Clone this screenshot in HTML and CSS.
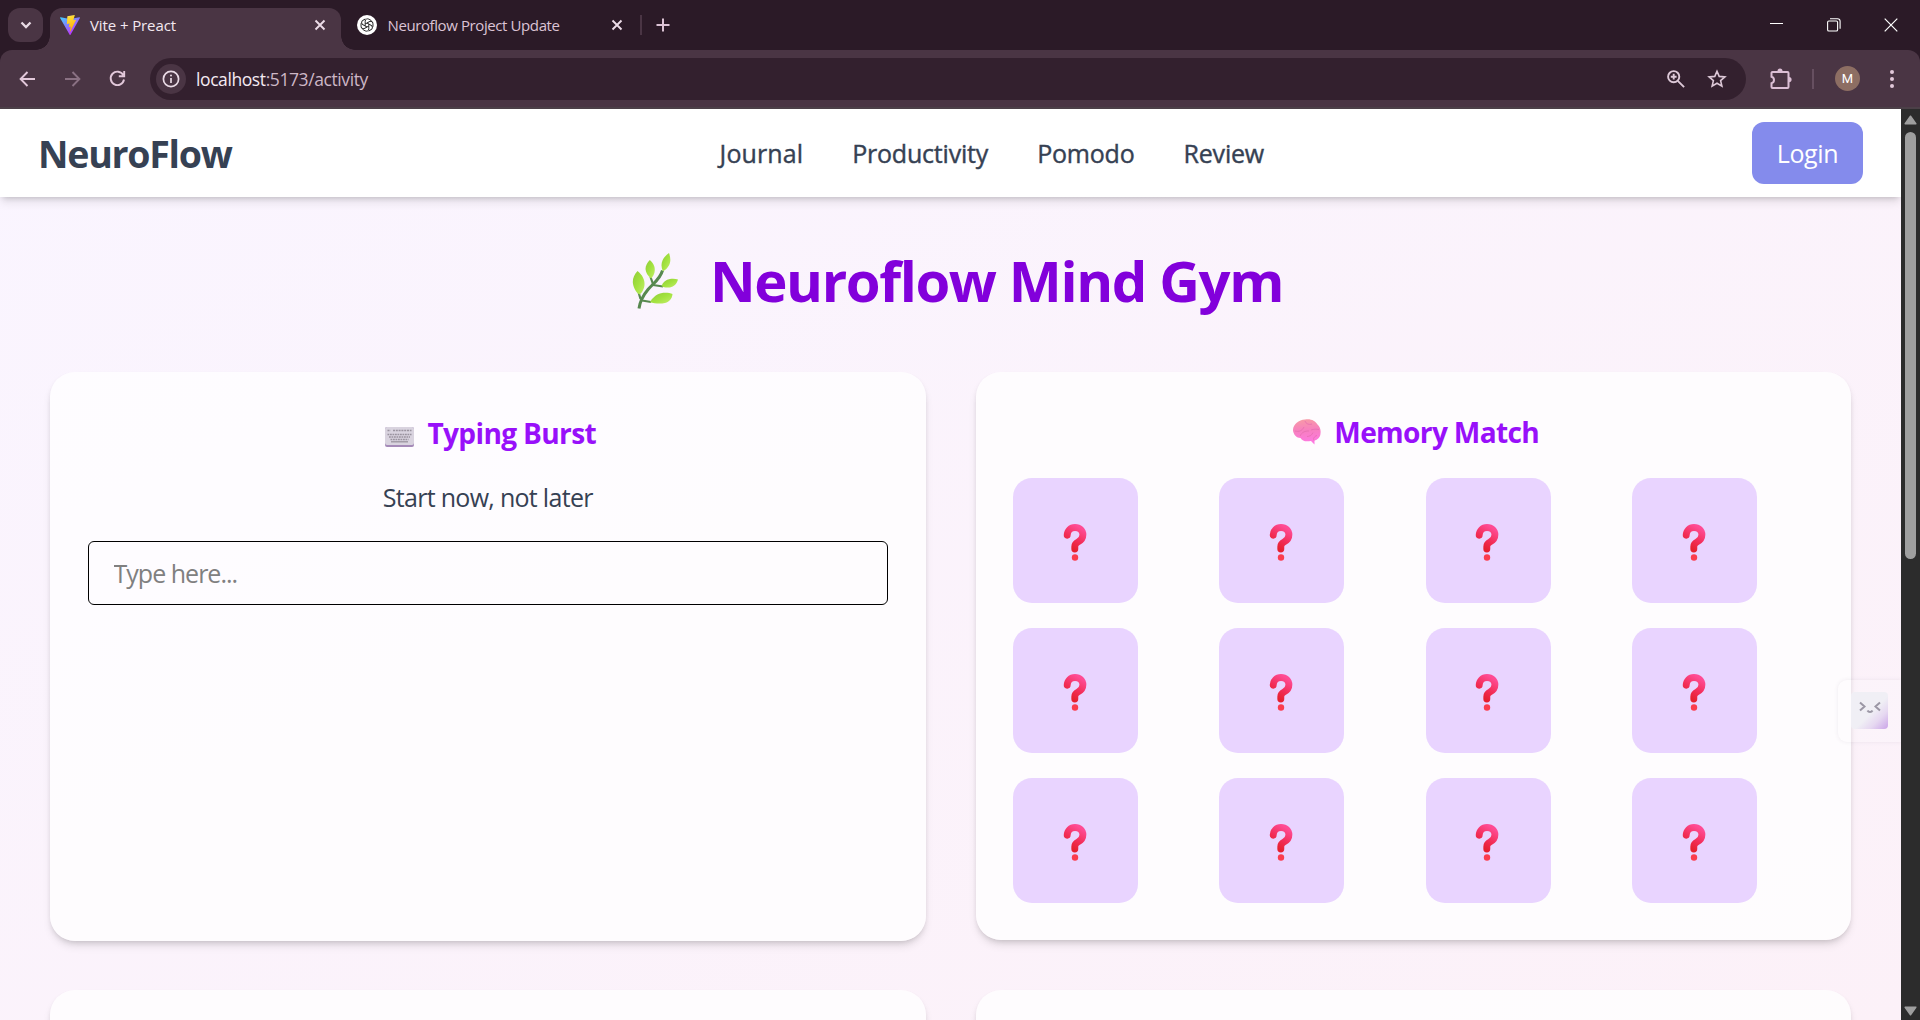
FILE: index.html
```html
<!DOCTYPE html>
<html lang="en">
<head>
<meta charset="utf-8">
<title>Vite + Preact</title>
<link rel="stylesheet" href="styles.css">
</head>
<body>
<svg class="defs" width="0" height="0" aria-hidden="true">
  <defs>
    <linearGradient id="vite-a" x1="0" y1="0" x2=".65" y2=".9"><stop offset="0" stop-color="#41d1ff"/><stop offset="1" stop-color="#bd34fe"/></linearGradient>
    <linearGradient id="vite-b" x1=".4" y1="0" x2=".6" y2="1"><stop offset="0" stop-color="#ffea83"/><stop offset=".1" stop-color="#ffdd35"/><stop offset="1" stop-color="#ffa800"/></linearGradient>
    <linearGradient id="q-grad" x1=".8" y1="0" x2=".35" y2="1"><stop offset="0" stop-color="#ff4b94"/><stop offset=".55" stop-color="#f32e59"/><stop offset="1" stop-color="#e6202f"/></linearGradient>
    <linearGradient id="leaf" x1="0" y1="0" x2="1" y2="1"><stop offset="0" stop-color="#8fcb3a"/><stop offset=".5" stop-color="#a3e23f"/><stop offset="1" stop-color="#c3ee6c"/></linearGradient>
    <linearGradient id="brain" x1=".4" y1="0" x2=".5" y2="1"><stop offset="0" stop-color="#f79aa6"/><stop offset=".45" stop-color="#f77fc0"/><stop offset="1" stop-color="#ff78e6"/></linearGradient>
    <symbol id="question" viewBox="0 0 24 38">
      <path d="M4.200 12.200C4.400 7.500 7.500 4.500 12 4.500c4.700 0 7.900 3 7.900 7.300 0 3.300-1.900 5.700-4.900 7.200-2.200 1.100-3.200 2.200-3.200 4.400V26" fill="none" stroke="url(#q-grad)" stroke-width="6.900" stroke-linecap="round" stroke-linejoin="round"/>
      <circle cx="12" cy="34.500" r="3.200" fill="#fb3d4e"/>
    </symbol>
    <symbol id="close" viewBox="0 0 12 12"><path d="M1.500 1.500l9 9m0-9l-9 9" fill="none" stroke="currentColor" stroke-width="1.900"/></symbol>
    <path id="knot" d="M8.200 10.800V6.200a2.400 2.400 0 0 1 3.700-2l2.600 1.500"/>
  </defs>
</svg>

<div class="browser">
  <div class="tabstrip">
    <div class="tab-search"><svg width="14" height="10" viewBox="0 0 14 10"><path d="M2.500 2.500L7 7l4.500-4.500" fill="none" stroke="#e9dbe5" stroke-width="2.300"/></svg></div>
    <div class="tab active">
      <svg class="favicon" viewBox="0 0 256 257"><path fill="url(#vite-a)" d="M255.153 37.938L134.897 252.976c-2.483 4.440-8.862 4.466-11.382.048L.875 37.958c-2.746-4.814 1.371-10.646 6.827-9.670l120.385 21.517a6.537 6.537 0 0 0 2.322-.004l117.867-21.483c5.438-.991 9.574 4.796 6.877 9.620Z"/><path fill="url(#vite-b)" d="M185.432.063L96.440 17.501a3.268 3.268 0 0 0-2.634 3.014l-5.474 92.456a3.268 3.268 0 0 0 3.997 3.378l24.777-5.718c2.318-.535 4.413 1.507 3.936 3.838l-7.361 36.047c-.495 2.426 1.782 4.500 4.151 3.780l15.304-4.649c2.372-.72 4.652 1.360 4.150 3.788l-11.698 56.621c-.732 3.542 3.979 5.473 5.943 2.437l1.313-2.028l72.516-144.720c1.215-2.423-.88-5.186-3.540-4.672l-25.505 4.922c-2.396.462-4.435-1.770-3.759-4.114l16.646-57.705c.677-2.350-1.370-4.583-3.769-4.113Z"/></svg>
      <span class="tab-title">Vite + Preact</span>
      <svg class="tab-close" width="12" height="12"><use href="#close"/></svg>
    </div>
    <div class="tab">
      <svg class="favicon" viewBox="0 0 20 20"><circle cx="10" cy="10" r="10" fill="#fff"/><g fill="none" stroke="#151515" stroke-width=".9"><use href="#knot"/><use href="#knot" transform="rotate(60 10 10)"/><use href="#knot" transform="rotate(120 10 10)"/><use href="#knot" transform="rotate(180 10 10)"/><use href="#knot" transform="rotate(240 10 10)"/><use href="#knot" transform="rotate(300 10 10)"/></g></svg>
      <span class="tab-title tight">Neuroflow Project Update</span>
      <svg class="tab-close" width="12" height="12"><use href="#close"/></svg>
    </div>
    <span class="tab-divider"></span>
    <svg class="new-tab" width="14" height="14" viewBox="0 0 14 14"><path d="M7 .5v13M.5 7h13" stroke="#dcc3d5" stroke-width="2"/></svg>
    <div class="window-controls">
      <svg width="14" height="14" viewBox="0 0 14 14"><path d="M0 5.500h13" stroke="#fff"/></svg>
      <svg width="14" height="14" viewBox="0 0 14 14" fill="none" stroke="#fff" stroke-width="1.100"><rect x=".6" y="3" width="10" height="10" rx="1.300"/><path d="M3 .7h7.500a2.600 2.600 0 0 1 2.600 2.600v7.500"/></svg>
      <svg width="14" height="14" viewBox="0 0 14 14"><path d="M.7.7l12.600 12.600m0-12.600L.7 13.300" stroke="#fff" stroke-width="1.200"/></svg>
    </div>
  </div>

  <div class="toolbar">
    <svg class="nav-icon" width="17" height="16" viewBox="0 0 17 16"><path d="M16 8H2M8.500 1L1.600 8l6.900 7" fill="none" stroke="#e2c8da" stroke-width="1.900"/></svg>
    <svg class="nav-icon forward" width="17" height="16" viewBox="0 0 17 16"><path d="M1 8h14M8.500 1l6.900 7-6.900 7" fill="none" stroke="#8a7183" stroke-width="1.900"/></svg>
    <svg class="nav-icon reload" width="17" height="17" viewBox="0 0 17 17"><path d="M14.200 5A6.700 6.700 0 1 0 15 9.500M15.200 1v5.300H9.800" fill="none" stroke="#e2c8da" stroke-width="1.900"/></svg>
    <div class="omnibox">
      <span class="site-info"><svg width="18" height="18" viewBox="0 0 18 18"><circle cx="9" cy="9" r="7.600" fill="none" stroke="#eadbe6" stroke-width="1.700"/><path d="M9 8v5" stroke="#eadbe6" stroke-width="1.700"/><circle cx="9" cy="5.500" r="1" fill="#eadbe6"/></svg></span>
      <span class="url">localhost<span class="url-rest">:5173/activity</span></span>
      <svg class="zoom-icon" width="18" height="18" viewBox="0 0 18 18"><g fill="none" stroke="#ddc8d7" stroke-width="1.900"><circle cx="6.700" cy="6.700" r="5.600"/><path d="M10.800 10.800l6.300 6.300M6.700 3.800v5.800M3.800 6.700h5.800"/></g></svg>
      <svg width="20" height="19" viewBox="0 0 20 19"><path d="M10 2.200l2.200 5.200 5.700.5-4.300 3.700 1.300 5.500-4.900-2.900-4.900 2.900 1.300-5.500L2.100 7.900l5.700-.5z" fill="none" stroke="#ddc8d7" stroke-width="1.600"/></svg>
    </div>
    <svg class="extensions" width="22" height="22" viewBox="0 0 22 22"><path d="M2.500 4h15a1 1 0 0 1 1 1v14a1 1 0 0 1-1 1h-15a1 1 0 0 1-1-1v-3.800a3.300 3.300 0 0 0 0-6.400V5a1 1 0 0 1 1-1z" fill="none" stroke="#dcbfd5" stroke-width="2"/><path d="M7.500 3a2.500 2.500 0 0 1 5 0zM19 9a2.600 2.600 0 0 1 0 5.200z" fill="#dcbfd5"/></svg>
    <span class="toolbar-divider"></span>
    <span class="avatar">M</span>
    <svg class="menu" width="4" height="18" viewBox="0 0 4 18" fill="#e2c8da"><circle cx="2" cy="2" r="2"/><circle cx="2" cy="9" r="2"/><circle cx="2" cy="16" r="2"/></svg>
  </div>

  <div class="viewport">
    <div class="page">
      <header class="site-header">
        <div class="brand">NeuroFlow</div>
        <nav class="site-nav"><a class="journal">Journal</a><a>Productivity</a><a>Pomodo</a><a>Review</a></nav>
        <button class="login">Login</button>
      </header>
      <main class="content">
        <h1 class="title">
          <svg class="herb" width="46" height="56" viewBox="0 0 46 56"><path d="M7 55.500c1-8 4-13 9-19 4.500-5.500 12-10 14.500-19" fill="none" stroke="#57884f" stroke-width="3"/><path d="M10 47.500l9 1.500M21 32l10 1.500M6.500 39l2 7M18.500 24l2.500 7" fill="none" stroke="#57884f" stroke-width="2.200"/><g fill="url(#leaf)"><path d="M5.500 18c5 4 7.500 9 7 14-.4 4-2.500 8-5 9.500C3.500 39 1 33.500.800 29c-.1-4 1.700-8 4.700-11z"/><path d="M17.800 7c4.500 4 5.500 8 4.800 12-.6 3-2 5-3.500 6.500-3-2.500-5.500-6-5.600-9.500 0-3.300 1.800-6.500 4.300-9z"/><path d="M37 0c1.800 5 1.800 9-.1 12.500-1.400 2.600-3.500 4.800-6 5.800-1.700-3.700-1.900-7.500-.3-11C31.900 4.400 34 2 37 0z"/><path d="M46 26.500c-1.500 4.700-4 7.300-8 7.900-3.500.5-6.500-.2-8.500-1.400 1.500-3.800 4.500-6.500 8.500-7 3-.4 5.800-.2 8 .5z"/><path d="M40.500 41c-.5 4.500-3 7.800-7.500 9-5 1.200-10.500.5-15-.8 2-4 6-8 11-9 4-.8 8.500-.5 11.500.8z"/></g></svg>
          <span>Neuroflow Mind Gym</span>
        </h1>
        <div class="cards">
          <section class="card typing">
            <h2 class="card-title">
              <svg width="29" height="20" viewBox="0 0 29 20"><rect width="29" height="20" rx="2" fill="#a58ab8"/><rect width="29" height="18" rx="2" fill="#d9d3df"/><g stroke="#9a939f" stroke-width="1.300" fill="none"><path d="M2.500 3.500h3m2.500 0h18.500" stroke-dasharray="2 .8"/><path d="M2.500 7.500h24M4 10h21M5.500 12.500h18" stroke-dasharray="1.800 .7"/><path d="M6 14.800h17"/></g></svg>
              <span>Typing Burst</span>
            </h2>
            <p class="prompt">Start now, not later</p>
            <input class="answer" type="text" placeholder="Type here...">
          </section>
          <section class="card memory">
            <h2 class="card-title">
              <svg width="28" height="26" viewBox="0 0 28 26"><path d="M12 .5c5-1.300 10.500 1 12.500 5 2.500 2 3.500 5.500 3 9-.2 4-3 6.500-6 7v4l-3.500-3.500c-5 .8-8.500.5-10.500-3C3.500 19 .500 15.500 0 11.500-.200 5.500 5.500 1 12 .5z" fill="url(#brain)"/><path d="M2 12c4 1 7 0 9-4m-4 9c2-4 5-5 9-5m-4-10c1 3 4 4 7 3m-1 6c3-1 5-1 8-.5m-12 7c2 0 5-1 6-4m1 8c-1-2 0-4 3-5" fill="none" stroke="#e56fb0" stroke-width=".8"/></svg>
              <span>Memory Match</span>
            </h2>
            <div class="tiles">
              <button class="tile"><svg><use href="#question"/></svg></button><button class="tile"><svg><use href="#question"/></svg></button><button class="tile"><svg><use href="#question"/></svg></button><button class="tile"><svg><use href="#question"/></svg></button>
              <button class="tile"><svg><use href="#question"/></svg></button><button class="tile"><svg><use href="#question"/></svg></button><button class="tile"><svg><use href="#question"/></svg></button><button class="tile"><svg><use href="#question"/></svg></button>
              <button class="tile"><svg><use href="#question"/></svg></button><button class="tile"><svg><use href="#question"/></svg></button><button class="tile"><svg><use href="#question"/></svg></button><button class="tile"><svg><use href="#question"/></svg></button>
            </div>
          </section>
          <section class="card next"></section>
          <section class="card next"></section>
        </div>
      </main>
      <div class="helper"><div class="face"><svg width="22" height="13" viewBox="0 0 22 13"><path d="M1 1.500l4.500 4L1 9.500M21 1.500l-4.500 4 4.500 4M8.500 9.500c1 2 4 2 5 0" fill="none" stroke="#9b97a5" stroke-width="2"/></svg></div></div>
    </div>
    <div class="scrollbar">
      <svg width="13" height="10" viewBox="0 0 13 10"><path d="M6.500 1.200L11.800 8.800H1.200z" fill="#9f9f9f" stroke="#9f9f9f" stroke-width="1.500" stroke-linejoin="round"/></svg>
      <div class="thumb"></div>
      <svg class="down" width="13" height="10" viewBox="0 0 13 10"><path d="M6.500 8.800L11.800 1.200H1.200z" fill="#9f9f9f" stroke="#9f9f9f" stroke-width="1.500" stroke-linejoin="round"/></svg>
    </div>
  </div>
</div>
</body>
</html>
```
FILE: styles.css
```css
* { box-sizing: border-box; }
body { margin: 0; font-family: "Open Sans", "Noto Sans", sans-serif; color: #364153; }
svg { display: block; flex: none; }
.defs { position: absolute; }
button { border: 0; font: inherit; }

.browser { display: flex; flex-direction: column; width: 1920px; height: 1020px; overflow: hidden; background: #2b1a27; }

/* Tab strip */
.tabstrip { display: flex; align-items: flex-start; height: 50px; padding: 8px 0 0 8px; color: #dcc3d5; }
.tab-search { display: flex; align-items: center; justify-content: center; width: 35px; height: 34px; border-radius: 12px; background: #4a3544; }
.tab { position: relative; display: flex; align-items: center; height: 34px; width: 282px; padding: 0 0 0 16px; }
.tab.active { width: 291px; height: 42px; margin-left: 7px; padding: 0 15px 8px 10px; border-radius: 12px 12px 0 0; background: #4a3544; color: #f3e8f0; }
.tab.active::before, .tab.active::after { content: ""; position: absolute; bottom: 0; width: 14px; height: 14px; }
.tab.active::before { left: -14px; background: radial-gradient(circle at 0 0, transparent 13.500px, #4a3544 14px); }
.tab.active::after { right: -14px; background: radial-gradient(circle at 100% 0, transparent 13.500px, #4a3544 14px); }
.favicon { width: 20px; height: 20px; }
.tab-title { margin-left: 10px; font-size: 15px; line-height: 20px; letter-spacing: -.1px; white-space: nowrap; }
.tab-title.tight { letter-spacing: -.4px; margin-left: 10.500px; }
.tab-close { margin-left: auto; color: #ecdce8; }
.tab-divider { width: 2px; height: 20px; margin: 7px 0 0 17px; background: #4a3544; }
.new-tab { margin: 10px 0 0 14px; }
.window-controls { display: flex; gap: 43px; margin: 10px 22px 0 auto; }

/* Toolbar */
.toolbar { display: flex; align-items: center; height: 59px; padding: 0 26px 0 19px; background: #4a3544; border-bottom: 2px solid #4c4048; border-radius: 12px 12px 0 0; }
.nav-icon.forward { margin-left: 28px; }
.nav-icon.reload { margin-left: 28px; }
.omnibox { display: flex; align-items: center; width: 1597px; height: 42px; margin-left: 24px; padding: 0 19px 0 6px; border-radius: 21px; background: #33202e; }
.site-info { display: flex; align-items: center; justify-content: center; width: 30px; height: 30px; border-radius: 50%; background: #4a3544; }
.url { margin-left: 10px; font-size: 17.500px; letter-spacing: -.41px; color: #f5eaf2; }
.url-rest { color: #cdb7c6; }
.zoom-icon { margin: 0 22px 0 auto; }
.extensions { margin-left: 24px; }
.toolbar-divider { width: 2px; height: 20px; margin-left: 20px; background: #664f60; }
.avatar { width: 25px; height: 25px; margin: 0 30px 0 21px; border-radius: 50%; background: #8d6e63; color: #fff; font: 13px/25px Roboto, sans-serif; text-align: center; }

/* Viewport */
.viewport { display: flex; height: 911px; }
.page { position: relative; width: 1901px; height: 911px; overflow: hidden; background: linear-gradient(to bottom right, #faf5ff, #fcf1f8); }
.site-header { position: relative; display: flex; align-items: center; justify-content: space-between; height: 88px; padding: 0 38px 0 38px; background: #fff; box-shadow: 0 6px 9px -1px rgba(0,0,0,.1), 0 3px 6px -3px rgba(0,0,0,.2); }
.brand { font-size: 37.500px; font-weight: 700; letter-spacing: -1.250px; }
.site-nav { display: flex; gap: 49px; font-size: 25px; font-weight: 500; letter-spacing: -.2px; -webkit-text-stroke: .4px currentColor; }
.site-nav .journal { letter-spacing: .1px; }
.login { width: 111px; height: 62px; padding: 0; border-radius: 12px; background: #848bec; color: #fff; font-size: 25px; letter-spacing: -.4px; }
.content { padding: 50px; }
.title { display: flex; align-items: center; justify-content: center; gap: 32px; height: 65px; margin: 0 0 60px; padding-left: 14px; color: #8200db; font-size: 56.250px; line-height: 70px; letter-spacing: -1.390px; }
.title .herb { margin-top: 3px; }
.cards { display: grid; grid-template-columns: 1fr 1fr; gap: 49px 50px; align-items: start; }
.card { height: 569px; padding: 37.500px; border-radius: 25px; background: rgba(255,255,255,.75); box-shadow: 0 6px 9px -1px rgba(0,0,0,.1), 0 3px 6px -3px rgba(0,0,0,.2); }
.card.memory { height: 568px; }
.card.next { height: 250px; }
.card-title { display: flex; align-items: center; justify-content: center; gap: 13px; height: 44px; margin: 0; padding-left: 6px; color: #9810fa; font-size: 28.125px; line-height: 44px; letter-spacing: -.66px; }
.typing .card-title { position: relative; top: 1px; }
.typing .card-title svg { margin-top: 8px; }
.prompt { margin: 23px 0 24px; font-size: 25px; line-height: 40px; letter-spacing: -.7px; text-align: center; }
.answer { display: block; width: 100%; height: 64px; padding: 0 25px; border: 1px solid #000; border-radius: 6px; background: transparent; font: inherit; font-size: 25px; letter-spacing: -.98px; }
.answer::placeholder { color: #808080; }
.tiles { display: grid; grid-template-columns: repeat(4, 1fr); gap: 25px; margin-top: 24.500px; }
.tile { display: flex; align-items: center; justify-content: center; width: 125px; height: 125px; padding: 3px 2px 0 0; border-radius: 19px; background: #e9d4ff; }
.tile svg { width: 24px; height: 38px; }

/* Floating helper */
.helper { position: absolute; right: 0; top: 571px; width: 63px; height: 62px; padding: 12px 0 0 13px; border-radius: 9px 0 0 9px; background: rgba(255,255,255,.15); box-shadow: 0 0 4px rgba(80,50,90,.09); }
.face { width: 37px; height: 37px; padding: 9px 0 0 8px; border-radius: 4px; background: linear-gradient(135deg, #f0eff5 55%, #e6d8f1 75%, #cba4e8); }

.scrollbar { display: flex; flex-direction: column; align-items: center; width: 19px; padding: 6px 0 4px; background: #2c2c2c; }
.thumb { width: 11px; height: 427px; margin-top: 7px; border-radius: 6px; background: #9f9f9f; }
.scrollbar .down { margin-top: auto; }
```
